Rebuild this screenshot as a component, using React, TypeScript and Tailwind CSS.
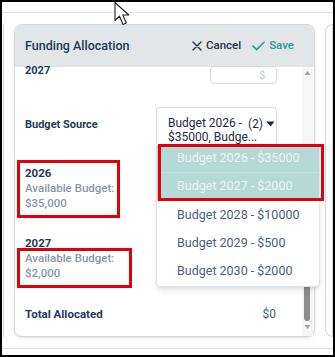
import React from "react";

const font = { fontFamily: "Roboto, 'Noto Sans', sans-serif" };

function Cursor() {
  return (
    <svg className="absolute left-[112px] top-0" width="18" height="24" viewBox="0 0 18 24">
      <path d="M1 0.5 L1 18.5 L5.5 14.2 L9 22.5 L12.3 21 L8.8 13 L14.8 13 Z" fill="#fff" stroke="#222" strokeWidth="1.1" strokeLinejoin="round" />
    </svg>
  );
}

function Scrollbar() {
  return (
    <div className="relative w-[11px] bg-[#f6f6f6]">
      <svg className="absolute left-[2px] top-[3px]" width="7" height="6" viewBox="0 0 7 6">
        <path d="M0.5 5 L3.5 1 L6.5 5 Z" fill="#a3a3a3" />
      </svg>
      <div className="absolute left-[2px] top-[192px] h-[62px] w-[6px] rounded-full bg-[#8d8d8d]" />
      <svg className="absolute left-[2px] top-[257px]" width="7" height="6" viewBox="0 0 7 6">
        <path d="M0.5 1 L3.5 5 L6.5 1 Z" fill="#a3a3a3" />
      </svg>
    </div>
  );
}

const items = [
  { label: "Budget 2026 - $35000", on: true },
  { label: "Budget 2027 - $2000", on: true },
  { label: "Budget 2028 - $10000", on: false },
  { label: "Budget 2029 - $500", on: false },
  { label: "Budget 2030 - $2000", on: false },
];

export default function App() {
  return (
    <div style={font} className="relative flex h-[357px] w-[335px] flex-col overflow-hidden border-2 border-black bg-white">
      <div className="h-[11px] shrink-0 border-b border-[#e3e6e9]" />
      <div className="mt-[11px] flex h-[313px] shrink-0 gap-[10px]">
        <div className="w-[2px] shrink-0 rounded-tr-lg border-r border-t border-[#d4d8dc]" />

        <div className="flex w-[301px] shrink-0 flex-col overflow-visible rounded-lg border border-[#d4d8dc] bg-white shadow-sm">
          <div className="flex h-[42px] shrink-0 items-center justify-between rounded-t-lg bg-[#e3e6e9] pl-[10px] pr-[20px]">
            <span className="text-[12.5px] font-medium text-[#1e3a52]">Funding Allocation</span>
            <div className="flex items-center">
              <svg width="10" height="10" viewBox="0 0 10 10" className="mr-[4px]">
                <path d="M1 1 L9 9 M9 1 L1 9" stroke="#1f3347" strokeWidth="1.4" strokeLinecap="round" />
              </svg>
              <span className="text-[11.5px] font-medium text-[#1f3347]">Cancel</span>
              <svg width="13" height="10" viewBox="0 0 13 10" className="ml-[11px] mr-[4px]">
                <path d="M1 5.2 L4.6 8.6 L12 1.2" fill="none" stroke="#1f9a8f" strokeWidth="1.6" strokeLinecap="round" strokeLinejoin="round" />
              </svg>
              <span className="text-[11.5px] font-medium text-[#1f9a8f]">Save</span>
            </div>
          </div>

          <div className="flex min-h-0 flex-1 rounded-b-lg">
            <div className="flex min-w-0 flex-1 flex-col pl-[10px] pr-[25px]">
              <div className="-mt-[3px] flex items-start justify-between">
                <span className="text-[11px] font-bold leading-[14px] text-[#1f3a57]">2027</span>
                <div className="mt-[2px] flex h-[18px] w-[67px] items-center justify-end rounded border border-[#d6dadf] pr-[11px] text-[10px] text-[#c6cbd0]">
                  $
                </div>
              </div>

              <div className="mt-[23px] flex items-center">
                <span className="w-[132px] text-[11px] font-bold text-[#1f3a57]">Budget Source</span>
                <div className="relative z-10">
                  <div className="relative h-[37px] w-[121px] rounded-t border border-b-0 border-[#d6dadf] bg-white pl-[11px] pt-[8px]">
                    <div className="whitespace-nowrap text-[12px] leading-[14px] text-[#1e2b3a]">
                      <div>Budget 2026 -</div>
                      <div>$35000, Budge...</div>
                    </div>
                    <div className="absolute right-[1px] top-[10px] flex items-center">
                      <span className="text-[12px] leading-[12px] text-[#1e2b3a]">(2)</span>
                      <svg width="9" height="6" viewBox="0 0 9 6" className="ml-[3px]">
                        <path d="M0.5 0.5 L8.5 0.5 L4.5 5.5 Z" fill="#1e2b3a" />
                      </svg>
                    </div>
                  </div>
                  <div className="absolute left-0 top-full w-[164px] rounded-b border border-t-0 border-[#e2e5e8] bg-white py-[1px] shadow-md">
                    <div className="relative">
                      {items.map((it) => (
                        <div
                          key={it.label}
                          className={
                            it.on
                              ? "flex h-[28px] items-center border-b border-[#c8e2e1] bg-[#b5d9d8] pl-[20px] text-[12.5px] text-[#eaf5f5]"
                              : "flex h-[28px] items-center pl-[20px] text-[12.5px] text-[#4c6078]"
                          }
                        >
                          {it.label}
                        </div>
                      ))}
                      <div className="absolute -top-[1px] left-[1px] h-[57px] w-[166px] border-[3px] border-[#e0000a]" />
                    </div>
                  </div>
                </div>
              </div>

              <div className="-ml-[8px] mt-[16px] w-[103px] border-[3px] border-[#e0000a] pb-[4px] pl-[5px] pt-[3px] text-[11.5px] leading-[15px]">
                <div className="font-bold text-[#1f3a57]">2026</div>
                <div className="font-medium text-[#8a96a3]">Available Budget:</div>
                <div className="font-medium text-[#8a96a3]">$35,000</div>
              </div>

              <div className="mt-[18px] text-[11.5px] font-bold leading-[15px] text-[#1f3a57]">2027</div>
              <div className="-ml-[8px] -mt-[3px] w-[115px] border-[3px] border-[#e0000a] pb-[4px] pl-[5px] text-[11.5px] leading-[15px]">
                <div className="font-medium text-[#8a96a3]">Available Budget:</div>
                <div className="font-medium text-[#8a96a3]">$2,000</div>
              </div>

              <div className="mt-[19px] flex items-center justify-between pr-[1px] text-[11.5px] leading-[15px]">
                <span className="font-bold text-[#1f3a57]">Total Allocated</span>
                <span className="text-[12px] text-[#3a5f80]">$0</span>
              </div>
            </div>
            <Scrollbar />
            <div className="w-[1px]" />
          </div>
        </div>

        <div className="flex-1 rounded-tl-lg rounded-bl-lg border border-[#d4d8dc]" />
      </div>
      <div className="mt-[11px] h-[1px] shrink-0 bg-[#e3e6e9]" />
      <Cursor />
    </div>
  );
}
